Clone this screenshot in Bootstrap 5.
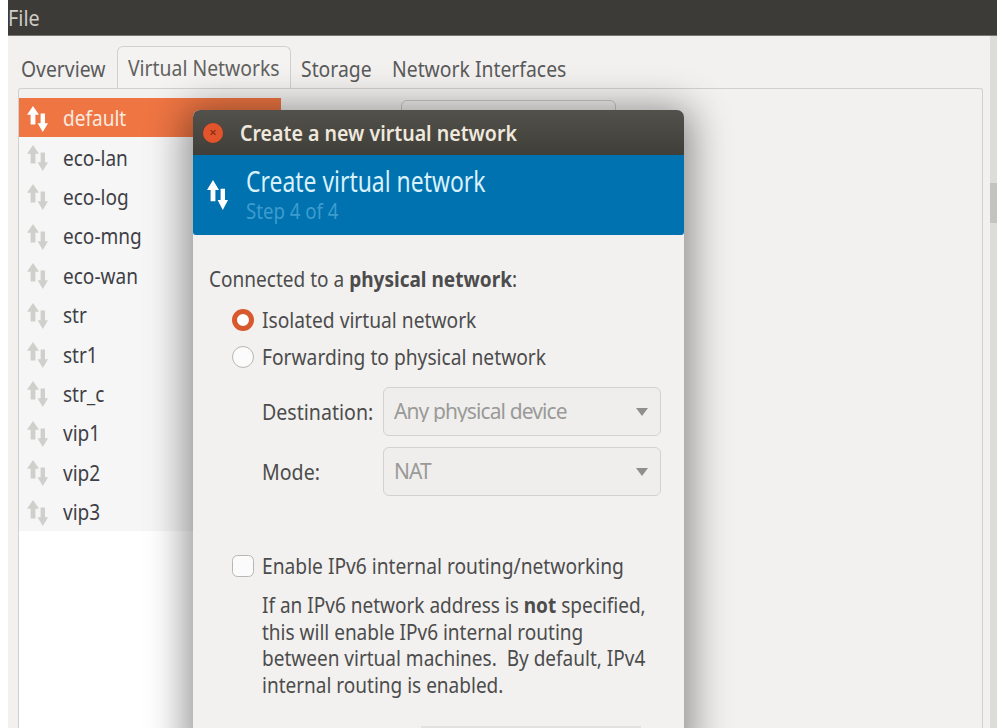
<!DOCTYPE html>
<html lang="en">
<head>
<meta charset="utf-8">
<title>Create a new virtual network</title>
<link href="https://cdn.jsdelivr.net/npm/bootstrap@5.3.0/dist/css/bootstrap.min.css" rel="stylesheet">
<style>
html,body{height:728px;overflow:hidden}
body{background:#fff;font-family:"Noto Sans","Liberation Sans",sans-serif;font-size:22px;color:#4c4c4c;position:relative}
.appwin{margin:0 6px 0 8px;height:728px;background:#f2f1f0}
.menubar{height:36px;background:#3c3b37;color:#cfcdc6;font-size:22px;line-height:34px;border-bottom:1px solid #77756f}
.menubar span{display:inline-block;transform:scaleX(.9);transform-origin:left}
.tabstrip{height:52px;padding:10px 0 0 3px}
.tabitem{height:42px;line-height:42px;white-space:nowrap;color:#5a5a5a}
.tabitem.on{border:1px solid #d2d0cc;border-bottom:0;border-radius:6px 6px 0 0;background:#f4f3f2;line-height:40px;color:#62625f}
.tabitem span{display:inline-block;transform-origin:left;transform:scaleX(.88)}
.t1{width:106px;padding-left:10px;margin-top:1px}
.t2{width:174px;padding-left:10px}
.t3{width:91px;padding-left:10px;margin-top:1px}
.t4{width:190px;padding-left:10px;margin-top:1px}
.panelrow{height:640px}
.panelbox{width:965px;margin-left:10px;height:640px;border:1px solid #d2d0cc;border-bottom:0;border-radius:3px 3px 0 0;padding:9px 0 0 0}
.scrollside{width:7px;margin-left:7px;margin-top:-52px;height:692px;background:#dddcd9}
.scrollside div{height:40px;margin-top:147px;background:#c4c3c0}
.netlist{width:262px;height:630px;background:#fff}
.netrow{height:39.4px;background:#f6f6f6;display:flex;align-items:center;color:#3f3f46}
.netrow.sel{background:#ef7543;color:#f8ebe0}
.netrow svg{margin:2px 0 0 7px;width:22px;height:26px;flex:none}
.netrow span{display:inline-block;margin:0 0 0 15px;transform:scaleX(.865);transform-origin:left}
.behindbox{width:215px;height:40px;margin:2px 0 0 120px;border:1px solid #c9c8c4;border-radius:6px;background:#f2f1f0}
.dlg{position:absolute;left:193px;top:110px;width:491px;height:640px;background:#f2f1f0;border-radius:7px 7px 0 0;box-shadow:0 6px 38px 8px rgba(0,0,0,.42)}
.dlgtitle{height:45px;background:linear-gradient(#53514b,#3f3e39);border-radius:7px 7px 0 0;color:#efe9dd;font-weight:600;font-size:22px;display:flex;align-items:center;padding-left:10px}
.dlgtitle span{transform:scaleX(.89);transform-origin:left;white-space:nowrap}
.closedot{width:20px;height:20px;border-radius:50%;background:#e2552c;color:#8a2c14;font-size:13px;line-height:19px;text-align:center;margin-right:17px;flex:none;box-shadow:0 0 1px #7a3a25}
.dlghead{height:80px;background:#0072b0;border-radius:0 0 3px 3px;display:flex;align-items:center;color:#d8f1fb}
.dlghead svg{margin-left:13px;width:22px;height:30px;flex:none}
.headtext{margin-left:18px;margin-top:-4px}
.headmain{font-size:29px;line-height:36px;transform:scaleX(.79);transform-origin:left;white-space:nowrap}
.headsub{font-size:21px;line-height:24px;color:#3d9ccd;transform:scaleX(.887);transform-origin:left}
.dlgbody{padding:30px 23px 0 16px}
.squeeze{display:inline-block;transform:scaleX(.873);transform-origin:left;white-space:nowrap}
.squeeze.tight{transform:scaleX(.865)}
.line1{height:30px;line-height:26px}
.optline{height:37px;display:flex;align-items:center;margin-left:23px}
.optline .form-check-input{width:22px;height:22px;margin:0 8px 0 0;flex:none;border-color:#b8b7b3;background-color:#fbfbfb}
.optline .form-check-input:checked{border:5px solid #d8592e;background:#fff;background-image:none}
.optline.first{margin-top:6px}
.fieldrow{display:flex;align-items:center;margin-left:53px;height:49px;margin-bottom:11px}
.fieldrow label{width:121px;flex:none}
.fieldrow label .squeeze{transform:scaleX(.89)}
.fieldrow .form-select{width:278px;height:49px;font:inherit;font-size:21px;letter-spacing:-.9px;line-height:1;color:#9a9a98;background-color:#efeeed;border-color:#d3d2ce;border-radius:6px;padding:0 10px;--bs-form-select-bg-img:none;background-image:none}
.selwrap{position:relative}
.selwrap::after{content:"";position:absolute;right:13px;top:21px;border:6px solid transparent;border-top:8px solid #8f8f8d;border-bottom:0}
.fieldrow.top{margin-top:12px}
.checkline{margin-top:51px}
.note{margin:7px 0 0 53px;line-height:26.7px;height:111px}
.note span{display:block;transform:scaleX(.864)}
.entrytop{height:2px;width:220px;margin:24px 0 0 212px;background:#e2e1de}
</style>
</head>
<body>
<div class="appwin">
  <div class="menubar"><span>File</span></div>
  <div class="tabstrip d-flex align-items-start">
    <div class="tabitem t1"><span>Overview</span></div>
    <div class="tabitem on t2"><span>Virtual Networks</span></div>
    <div class="tabitem t3"><span>Storage</span></div>
    <div class="tabitem t4"><span>Network Interfaces</span></div>
  </div>
  <div class="panelrow d-flex">
    <div class="panelbox d-flex">
      <div class="netlist">
        <div class="netrow sel"><svg viewBox="0 0 22 24" preserveAspectRatio="none"><use href="#updown" fill="#fff"/></svg><span>default</span></div>
        <div class="netrow"><svg viewBox="0 0 22 24" preserveAspectRatio="none"><use href="#updown" fill="#cfcfcc"/></svg><span>eco-lan</span></div>
        <div class="netrow"><svg viewBox="0 0 22 24" preserveAspectRatio="none"><use href="#updown" fill="#cfcfcc"/></svg><span>eco-log</span></div>
        <div class="netrow"><svg viewBox="0 0 22 24" preserveAspectRatio="none"><use href="#updown" fill="#cfcfcc"/></svg><span>eco-mng</span></div>
        <div class="netrow"><svg viewBox="0 0 22 24" preserveAspectRatio="none"><use href="#updown" fill="#cfcfcc"/></svg><span>eco-wan</span></div>
        <div class="netrow"><svg viewBox="0 0 22 24" preserveAspectRatio="none"><use href="#updown" fill="#cfcfcc"/></svg><span>str</span></div>
        <div class="netrow"><svg viewBox="0 0 22 24" preserveAspectRatio="none"><use href="#updown" fill="#cfcfcc"/></svg><span>str1</span></div>
        <div class="netrow"><svg viewBox="0 0 22 24" preserveAspectRatio="none"><use href="#updown" fill="#cfcfcc"/></svg><span>str_c</span></div>
        <div class="netrow"><svg viewBox="0 0 22 24" preserveAspectRatio="none"><use href="#updown" fill="#cfcfcc"/></svg><span>vip1</span></div>
        <div class="netrow"><svg viewBox="0 0 22 24" preserveAspectRatio="none"><use href="#updown" fill="#cfcfcc"/></svg><span>vip2</span></div>
        <div class="netrow"><svg viewBox="0 0 22 24" preserveAspectRatio="none"><use href="#updown" fill="#cfcfcc"/></svg><span>vip3</span></div>
      </div>
      <div class="behindbox"></div>
    </div>
    <div class="scrollside"><div></div></div>
  </div>
</div>

<div class="dlg">
  <div class="dlgtitle"><div class="closedot">×</div><span>Create a new virtual network</span></div>
  <div class="dlghead">
    <svg viewBox="0 0 22 24" preserveAspectRatio="none"><use href="#updown" fill="#fff"/></svg>
    <div class="headtext">
      <div class="headmain">Create virtual network</div>
      <div class="headsub">Step 4 of 4</div>
    </div>
  </div>
  <div class="dlgbody">
    <div class="line1"><span class="squeeze tight">Connected to a <b>physical network</b>:</span></div>
    <div class="optline first"><input class="form-check-input" type="radio" name="nw" checked><span class="squeeze">Isolated virtual network</span></div>
    <div class="optline"><input class="form-check-input" type="radio" name="nw"><span class="squeeze">Forwarding to physical network</span></div>
    <div class="fieldrow top"><label><span class="squeeze">Destination:</span></label><div class="selwrap"><select class="form-select" disabled><option>Any physical device</option></select></div></div>
    <div class="fieldrow"><label><span class="squeeze">Mode:</span></label><div class="selwrap"><select class="form-select" disabled><option>NAT</option></select></div></div>
    <div class="optline checkline"><input class="form-check-input" type="checkbox"><span class="squeeze">Enable IPv6 internal routing/networking</span></div>
    <div class="note">
      <span class="squeeze">If an IPv6 network address is <b>not</b> specified,</span>
      <span class="squeeze">this will enable IPv6 internal routing</span>
      <span class="squeeze">between virtual machines.&nbsp; By default, IPv4</span>
      <span class="squeeze">internal routing is enabled.</span>
    </div>
    <div class="entrytop"></div>
  </div>
</div>

<svg width="0" height="0" class="d-block" aria-hidden="true">
  <defs>
    <g id="updown">
      <path d="M7 0 L13 8 H9.4 V17 H4.6 V8 H1 Z"/>
      <path d="M14.6 7 H19 V16 H22 L16.8 24 L11.6 16 H14.6 Z"/>
    </g>
  </defs>
</svg>
</body>
</html>
